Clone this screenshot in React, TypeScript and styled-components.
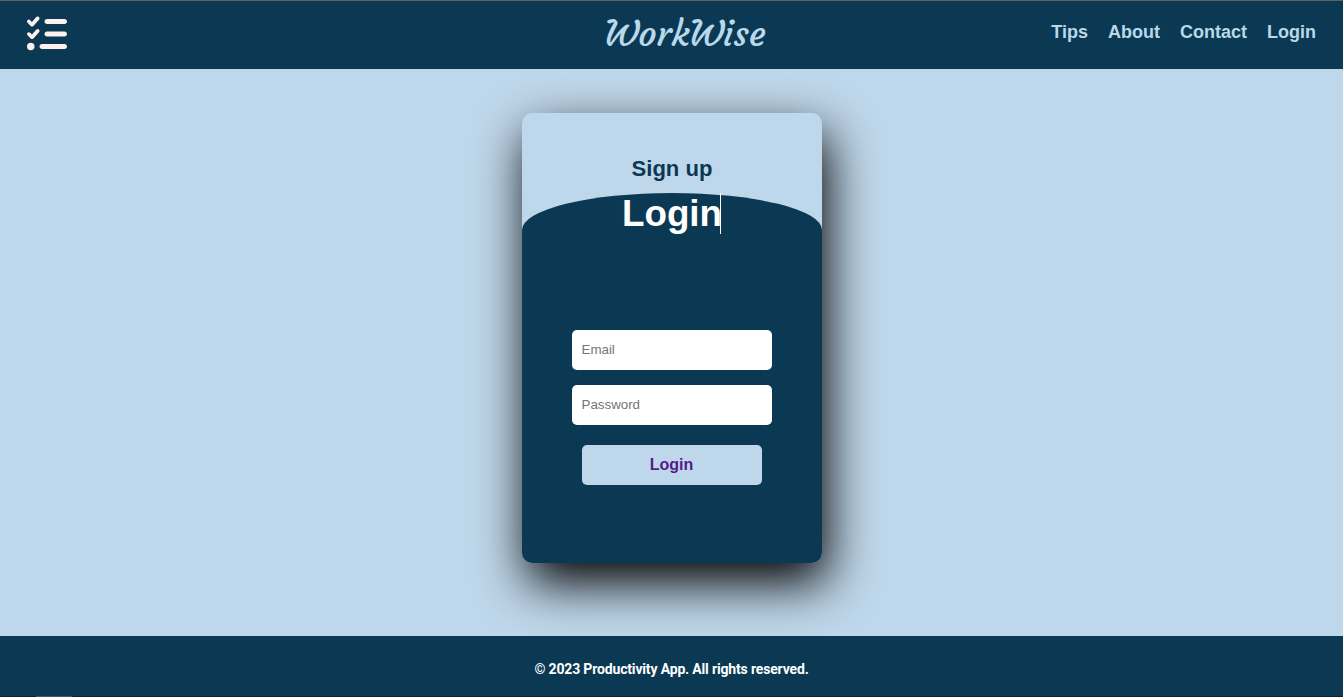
import React from "react";
import styled, { createGlobalStyle } from "styled-components";
import { FaListCheck } from "react-icons/fa6";

const navy = "#0b3954";
const sky = "#bfd7ea";
const pale = "#b9d9eb";

const GlobalStyle = createGlobalStyle`
  *, *::before, *::after { box-sizing: border-box; }
  body {
    margin: 0;
    background: ${sky};
    font-family: "Liberation Sans", Arial, sans-serif;
  }
`;

const Page = styled.div`
  display: flex;
  flex-direction: column;
  height: 697px;
  overflow: hidden;
`;

const Header = styled.header`
  display: grid;
  grid-template-columns: 1fr auto 1fr;
  align-items: center;
  flex: 0 0 69px;
  padding: 0 27px;
  border-top: 1px solid #5f6163;
  background: ${navy};
  position: relative;
  z-index: 1;
`;

const MenuIcon = styled(FaListCheck)`
  display: block;
  width: 40px;
  height: 40px;
  margin-bottom: 3px;
  color: #fff0f0;
`;

const Brand = styled.div`
  margin: 0 0 3px 27px;
  color: ${pale};
  font: 400 36px/50px Courgette, Lato, cursive;
`;

const Nav = styled.nav`
  display: flex;
  justify-content: flex-end;
  gap: 20px;
  margin-bottom: 5px;
`;

const NavLink = styled.a`
  color: ${pale};
  font-size: 18px;
  font-weight: 700;
  line-height: 21px;
`;

const Main = styled.main`
  display: flex;
  justify-content: center;
  align-items: flex-start;
  flex: 1;
  padding: 44px 0 0 1px;
`;

const Card = styled.section`
  display: flex;
  flex-direction: column;
  width: 300px;
  height: 450px;
  overflow: hidden;
  border-radius: 10px;
  background: ${sky};
  box-shadow: 5px 20px 50px #000;
`;

const SignUpTitle = styled.h2`
  flex: 0 0 80px;
  margin: 0;
  padding-top: 43px;
  color: ${navy};
  font-size: 22.08px;
  line-height: 25px;
  text-align: center;
`;

const LoginPanel = styled.form`
  display: flex;
  flex-direction: column;
  align-items: center;
  flex: 1;
  border-radius: 50% 50% 0 0 / 10% 10% 0 0;
  background: ${navy};
`;

const LoginTitle = styled.h1`
  position: relative;
  margin: 0 0 96px;
  color: #fff;
  font-size: 36.8px;
  line-height: 41px;
`;

const Caret = styled.span`
  position: absolute;
  top: 0;
  right: 1px;
  width: 1px;
  height: 41px;
  background: #fff;
`;

const Field = styled.input`
  width: 200px;
  height: 40px;
  margin-bottom: 15px;
  padding: 0 10px 2px 9.5px;
  border: 0;
  border-radius: 5px;
  background: #fff;
  font: 13.333px "Liberation Sans", Arial, sans-serif;

  &::placeholder { color: #757575; }
`;

const Submit = styled.button`
  width: 180px;
  height: 40px;
  margin-top: 5px;
  padding: 0 1px 0 0;
  border: 0;
  border-radius: 5px;
  background: ${sky};
  color: #551a8b;
  font: 700 16px "Liberation Sans", Arial, sans-serif;
`;

const Footer = styled.footer`
  display: flex;
  flex-direction: column;
  flex: 0 0 61px;
  background: ${navy};
  position: relative;
  z-index: 1;
`;

const Copyright = styled.p`
  flex: 1;
  margin: 0;
  padding-top: 25px;
  color: #fff;
  font: 700 14px/17px Roboto, sans-serif;
  letter-spacing: -0.16px;
  text-align: center;
`;

const BottomEdge = styled.div`
  height: 1px;
  background: linear-gradient(90deg, #171b20 36px, #4b555d 36px, #4b555d 72px, #171b20 72px);
`;

export default function App() {
  return (
    <>
      <GlobalStyle />
      <Page>
        <Header>
          <MenuIcon />
          <Brand>WorkWise</Brand>
          <Nav>
            {["Tips", "About", "Contact", "Login"].map((label) => (
              <NavLink key={label}>{label}</NavLink>
            ))}
          </Nav>
        </Header>
        <Main>
          <Card>
            <SignUpTitle>Sign up</SignUpTitle>
            <LoginPanel>
              <LoginTitle>
                Login
                <Caret />
              </LoginTitle>
              <Field type="email" placeholder="Email" />
              <Field type="password" placeholder="Password" />
              <Submit type="button">Login</Submit>
            </LoginPanel>
          </Card>
        </Main>
        <Footer>
          <Copyright>© 2023 Productivity App. All rights reserved.</Copyright>
          <BottomEdge />
        </Footer>
      </Page>
    </>
  );
}
